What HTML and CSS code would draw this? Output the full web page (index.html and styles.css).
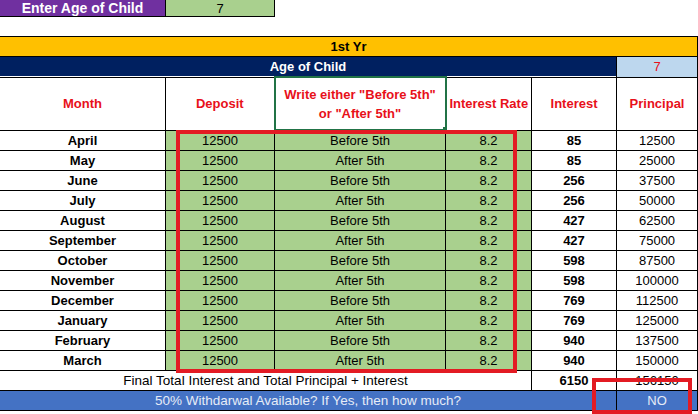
FILE: index.html
```html
<!DOCTYPE html>
<html>
<head>
<meta charset="utf-8">
<link rel="stylesheet" href="styles.css">
</head>
<body>
<div class="sheet">
  <table class="age-input">
    <colgroup><col class="c1"><col class="c2"></colgroup>
    <tr><td class="purple">Enter Age of Child</td><td class="green">7</td></tr>
  </table>

  <table class="grid">
    <colgroup>
      <col class="c1"><col class="c2"><col class="c3"><col class="c4"><col class="c5"><col class="c6">
    </colgroup>
    <tr class="yr"><td colspan="6">1st Yr</td></tr>
    <tr class="age"><td colspan="5" class="navy">Age of Child</td><td class="lightblue">7</td></tr>
    <tr class="head">
      <td>Month</td>
      <td>Deposit</td>
      <td class="selected">Write either "Before 5th"<br>or "After 5th"<span class="handle"></span></td>
      <td>Interest Rate</td>
      <td>Interest</td>
      <td>Principal</td>
    </tr>
    <tr><td class="b">April</td><td class="g">12500</td><td class="g">Before 5th</td><td class="g">8.2</td><td class="b">85</td><td>12500</td></tr>
    <tr><td class="b">May</td><td class="g">12500</td><td class="g">After 5th</td><td class="g">8.2</td><td class="b">85</td><td>25000</td></tr>
    <tr><td class="b">June</td><td class="g">12500</td><td class="g">Before 5th</td><td class="g">8.2</td><td class="b">256</td><td>37500</td></tr>
    <tr><td class="b">July</td><td class="g">12500</td><td class="g">After 5th</td><td class="g">8.2</td><td class="b">256</td><td>50000</td></tr>
    <tr><td class="b">August</td><td class="g">12500</td><td class="g">Before 5th</td><td class="g">8.2</td><td class="b">427</td><td>62500</td></tr>
    <tr><td class="b">September</td><td class="g">12500</td><td class="g">After 5th</td><td class="g">8.2</td><td class="b">427</td><td>75000</td></tr>
    <tr><td class="b">October</td><td class="g">12500</td><td class="g">Before 5th</td><td class="g">8.2</td><td class="b">598</td><td>87500</td></tr>
    <tr><td class="b">November</td><td class="g">12500</td><td class="g">After 5th</td><td class="g">8.2</td><td class="b">598</td><td>100000</td></tr>
    <tr><td class="b">December</td><td class="g">12500</td><td class="g">Before 5th</td><td class="g">8.2</td><td class="b">769</td><td>112500</td></tr>
    <tr><td class="b">January</td><td class="g">12500</td><td class="g">After 5th</td><td class="g">8.2</td><td class="b">769</td><td>125000</td></tr>
    <tr><td class="b">February</td><td class="g">12500</td><td class="g">Before 5th</td><td class="g">8.2</td><td class="b">940</td><td>137500</td></tr>
    <tr><td class="b">March</td><td class="g">12500</td><td class="g">After 5th</td><td class="g">8.2</td><td class="b">940</td><td>150000</td></tr>
    <tr class="total"><td colspan="4" class="wide">Final Total Interest and Total Principal + Interest</td><td class="b">6150</td><td>156150</td></tr>
    <tr class="withdraw"><td colspan="5" class="wide">50% Withdarwal Available? If Yes, then how much?</td><td>NO</td></tr>
  </table>

  <div class="mark mark-inputs"></div>
  <div class="mark mark-no"></div>
</div>
</body>
</html>
```

FILE: styles.css
```css
html, body {
  margin: 0;
  padding: 0;
  background: #fff;
}
.sheet {
  position: relative;
  width: 698px;
  height: 414px;
  overflow: hidden;
  font-family: "Liberation Sans", Arial, sans-serif;
  font-size: 13px;
  color: #000;
}
table {
  border-collapse: collapse;
  table-layout: fixed;
}
td {
  padding: 0;
  text-align: center;
  vertical-align: middle;
  border: 1px solid #000;
  height: 19px;
  line-height: 15px;
  white-space: nowrap;
  overflow: hidden;
}
.c1 { width: 166px; }
.c2 { width: 109px; }
.c3 { width: 171px; }
.c4 { width: 86px; }
.c5 { width: 85px; }
.c6 { width: 81px; }

.age-input {
  width: 275px;
  margin-top: -1px;
  margin-left: -1px;
}
.age-input td { height: 16px; }
.purple {
  background: #7030a0;
  color: #fff;
  font-weight: bold;
  font-size: 14px;
}
.green, .g { background: #a9d08e; }

.grid {
  width: 699px;
  margin-top: 19px;
  margin-left: -1px;
}
.yr td {
  background: #ffc000;
  font-weight: bold;
}
.navy {
  background: #002060;
  color: #fff;
  font-weight: bold;
}
.lightblue {
  background: #bdd7ee;
  color: #e8101a;
}
.head td {
  height: 51px;
  color: #e8101a;
  font-weight: bold;
  line-height: 19px;
}
.head td.selected {
  position: relative;
  border: 2px solid #217346;
  white-space: normal;
}
.handle {
  position: absolute;
  right: -4px;
  bottom: -4px;
  width: 5px;
  height: 5px;
  background: #217346;
  border: 1px solid #fff;
}
.b { font-weight: bold; }
.wide { font-size: 13.5px; }
.withdraw td {
  background: #4472c4;
  color: #e6ecf7;
}
.mark {
  position: absolute;
  border: 4px solid #e31b23;
  box-sizing: border-box;
}
.mark-inputs {
  left: 176px;
  top: 130px;
  width: 341px;
  height: 243px;
}
.mark-no {
  left: 592px;
  top: 378px;
  width: 100px;
  height: 36px;
}
```
